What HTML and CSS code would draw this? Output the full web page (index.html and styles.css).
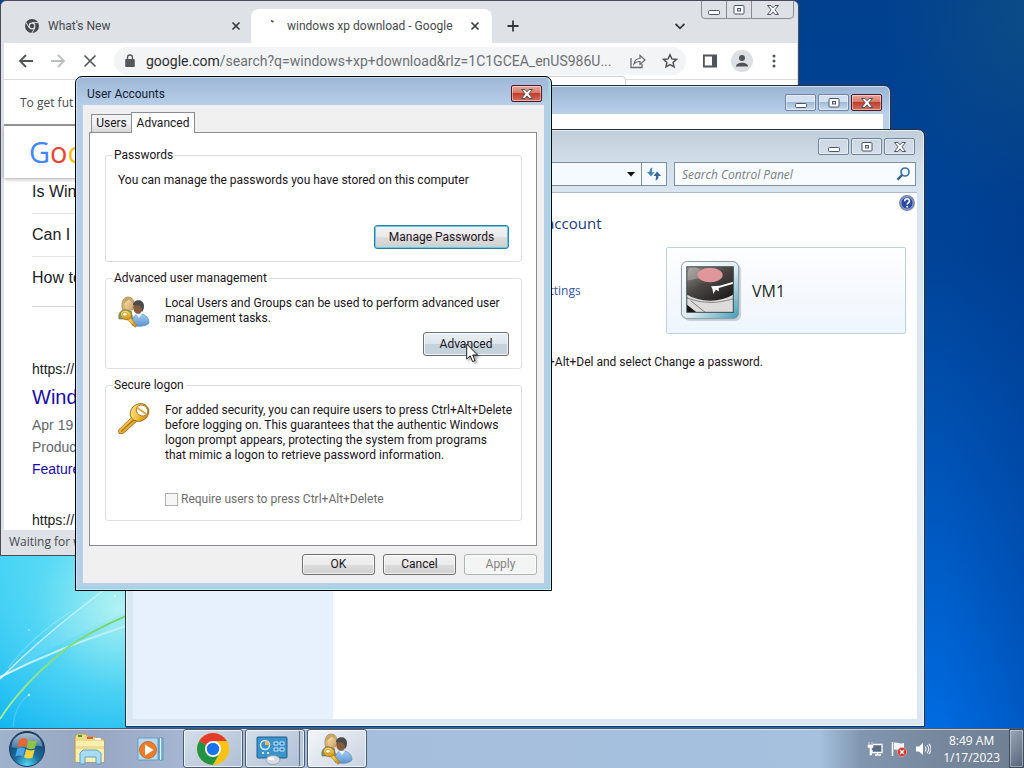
FILE: index.html
```html
<!DOCTYPE html>
<html lang="en">
<head>
<meta charset="utf-8">
<title>Desktop</title>
<link rel="stylesheet" href="styles.css">
</head>
<body>
<svg width="0" height="0" class="defs" aria-hidden="true">
  <defs>
    <linearGradient id="skin" x1="0" y1="0" x2="1" y2="1"><stop offset="0" stop-color="#f7dfb4"/><stop offset="1" stop-color="#cfa263"/></linearGradient>
    <linearGradient id="blueShirt" x1="0" y1="0" x2="0" y2="1"><stop offset="0" stop-color="#a5cdf2"/><stop offset="1" stop-color="#5b93d0"/></linearGradient>
    <linearGradient id="gold" x1="0" y1="0" x2="1" y2="1"><stop offset="0" stop-color="#fff0a0"/><stop offset=".5" stop-color="#f0bb35"/><stop offset="1" stop-color="#b97a12"/></linearGradient>
    <symbol id="i-users" viewBox="0 0 32 32">
      <path d="M4.500 14C3 9 4 1 10 1c5 0 6.500 4 5.500 9l-1 4z" fill="#d2b577" stroke="#94793f" stroke-width=".6"/>
      <ellipse cx="10.500" cy="9" rx="4" ry="5.200" fill="url(#skin)"/>
      <path d="M5.500 8C7 6 9 6 11 3c1 2 3 3 4 4 0-7-10-7-9.500 1z" fill="#c5a660"/>
      <path d="M1 23c-1-6 2-9 6-9l6 1 2 8z" fill="#86956a" stroke="#5d6d48" stroke-width=".6"/>
      <path d="M14 29c0-8 3-11 7-11 6 0 10 3 10 9-3 4-12 4-17 2z" fill="url(#blueShirt)" stroke="#4f80b5" stroke-width=".6"/>
      <ellipse cx="20" cy="11.500" rx="4.800" ry="6.300" fill="#855c3c"/>
      <path d="M15 9c0-6 11-7 11 1 0 3-1 5-2 6 0-4-1-6-3-6.500z" fill="#4b4a4c"/>
      <path d="M18 18l3 4 3-4z" fill="#e8f2fc"/>
      <path d="M11.500 20.500l7.500 9-2 1.800-8.500-8.500z" fill="url(#gold)" stroke="#9b7320" stroke-width=".6"/>
      <ellipse cx="8" cy="19" rx="5.600" ry="4.600" transform="rotate(25 8 19)" fill="url(#gold)" stroke="#9b7320" stroke-width=".6"/>
      <ellipse cx="6.800" cy="18.200" rx="2.400" ry="1.800" fill="#fffbe0" stroke="#9b7320" stroke-width=".5"/>
    </symbol>
    <symbol id="i-caption-min" viewBox="0 0 16 12"><rect x="2.500" y="6.500" width="11" height="4" rx="1" fill="#fff" stroke="#4b5468"/></symbol>
    <symbol id="i-caption-max" viewBox="0 0 16 12"><rect x="3" y="1.500" width="10" height="8.500" rx="1" fill="#fff" stroke="#4b5468"/><rect x="6.500" y="4.500" width="3" height="2.500" fill="#dfe8f2" stroke="#4b5468"/></symbol>
    <symbol id="i-caption-close" viewBox="0 0 16 12"><path d="M2.500 1.500h3.500L8 3.800l2-2.300h3.500L9.900 5.800l3.600 4.700H10L8 7.900l-2 2.600H2.500l3.600-4.700z" fill="#fff" stroke="#4b5468"/></symbol>
  </defs>
</svg>

<main class="desktop">
  <svg class="wallpaper" viewBox="0 0 126 172" preserveAspectRatio="none" aria-hidden="true">
    <defs>
      <linearGradient id="beam" x1="0" y1="1" x2="1" y2="0"><stop offset="0" stop-color="#fff" stop-opacity=".8"/><stop offset="1" stop-color="#fff" stop-opacity=".35"/></linearGradient>
      <linearGradient id="grass" x1="0" y1="1" x2="1" y2="0"><stop offset="0" stop-color="#a4f09a"/><stop offset="1" stop-color="#73cf5c"/></linearGradient>
    </defs>
    <path d="M0 122Q40 83 100 36h26v20Q55 89 0 122z" fill="#fff" opacity=".1"/>
    <path d="M0 123Q40 82 104 34" fill="none" stroke="url(#beam)" stroke-width="1.500"/>
    <path d="M8 112Q30 82 70 56" fill="none" stroke="#fff" stroke-opacity=".35"/>
    <path d="M0 121Q30 106 60 94T126 70" fill="none" stroke="url(#beam)" stroke-width="2"/>
    <path d="M0 163Q20 131 64 94Q90 75 126 60" fill="none" stroke="url(#grass)" stroke-width="1.800"/>
    <path d="M13 171Q14 151 28 139" fill="none" stroke="#fff" stroke-opacity=".25"/>
    <circle cx="29" cy="139" r="1.200" fill="#b8f5e0"/><circle cx="29" cy="74" r="1" fill="#9aeaff"/><circle cx="115" cy="40" r="1.200" fill="#e6ffff"/>
  </svg>

  <section class="window browser" aria-label="Browser">
    <header class="tabstrip">
      <div class="browser-tab">
        <svg class="icon14" viewBox="0 0 14 14"><circle cx="7" cy="7" r="7" fill="#45494d"/><circle cx="7" cy="7" r="3.400" fill="#dee1e6"/><circle cx="7" cy="7" r="2.200" fill="#45494d"/><path d="M7 3.600h6.200M4.100 8.700L1 3.400M9.900 8.700L6.900 14" stroke="#dee1e6" stroke-width="1"/></svg>
        <span class="tab-title">What's New</span>
        <button class="plain" aria-label="Close tab"><svg class="icon10" viewBox="0 0 10 10"><path d="M1.500 1.500l7 7m0-7l-7 7" stroke="#33373b" stroke-width="1.600"/></svg></button>
      </div>
      <div class="browser-tab current">
        <svg class="icon14" viewBox="0 0 14 14"><path d="M7 1.500l2.500 1.500" stroke="#555" stroke-width="1.600"/></svg>
        <span class="tab-title">windows xp download - Google</span>
        <button class="plain" aria-label="Close tab"><svg class="icon10" viewBox="0 0 10 10"><path d="M1.500 1.500l7 7m0-7l-7 7" stroke="#33373b" stroke-width="1.600"/></svg></button>
      </div>
      <button class="plain new-tab" aria-label="New tab"><svg class="icon12" viewBox="0 0 12 12"><path d="M6 .5v11M.5 6h11" stroke="#33373b" stroke-width="1.800"/></svg></button>
      <button class="plain tab-search" aria-label="Search tabs"><svg class="icon12" viewBox="0 0 12 12"><path d="M1.500 3.800L6 8.300l4.500-4.500" fill="none" stroke="#33373b" stroke-width="1.800"/></svg></button>
      <div class="glass-captions">
        <button aria-label="Minimize"><svg class="caption-icon"><use href="#i-caption-min"/></svg></button>
        <button aria-label="Maximize"><svg class="caption-icon"><use href="#i-caption-max"/></svg></button>
        <button class="wide" aria-label="Close"><svg class="caption-icon"><use href="#i-caption-close"/></svg></button>
      </div>
    </header>
    <nav class="toolbar">
      <button class="plain" aria-label="Back"><svg class="icon16" viewBox="0 0 16 16"><path d="M15 8H2M8 2L2 8l6 6" fill="none" stroke="#505357" stroke-width="1.800"/></svg></button>
      <button class="plain" aria-label="Forward"><svg class="icon16" viewBox="0 0 16 16"><path d="M1 8h13M8 2l6 6-6 6" fill="none" stroke="#bcbec1" stroke-width="1.800"/></svg></button>
      <button class="plain" aria-label="Stop"><svg class="icon16" viewBox="0 0 16 16"><path d="M2.500 2.500l11 11m0-11l-11 11" stroke="#505357" stroke-width="1.600"/></svg></button>
      <div class="omnibox">
        <svg class="icon14" viewBox="0 0 14 14"><path d="M3 5h8a.8.8 0 0 1 .8.800v6.400a.8.8 0 0 1-.8.800H3a.8.8 0 0 1-.8-.8V5.800A.8.8 0 0 1 3 5z" fill="#54575b"/><path d="M4.500 6V3.500a2.500 2.500 0 0 1 5 0V6" fill="none" stroke="#54575b" stroke-width="1.300"/></svg>
        <span class="url"><span class="host">google.com</span>/search?q=windows+xp+download&amp;rlz=1C1GCEA_enUS986U...</span>
        <button class="plain" aria-label="Share"><svg class="icon16" viewBox="0 0 16 16"><path d="M1 5v9.500h11V11" fill="none" stroke="#66696d" stroke-width="1.300"/><path d="M4 11c.5-4 3-5.500 6-5.500V2.300l5 4.700-5 4.500V8.500c-3 0-4.500.5-6 2.500z" fill="none" stroke="#66696d" stroke-width="1.200"/></svg></button>
        <button class="plain" aria-label="Bookmark"><svg class="icon16" viewBox="0 0 16 16"><path d="M8 1.800l1.900 4.100 4.500.5-3.300 3 .9 4.500-4-2.300-4 2.300.9-4.500-3.300-3 4.500-.5z" fill="none" stroke="#505357" stroke-width="1.500"/></svg></button>
      </div>
      <button class="plain" aria-label="Side panel"><svg class="icon16" viewBox="0 0 16 16"><path fill="#505357" fill-rule="evenodd" d="M1 1.500h14v13H1zM2.800 3.500v9H10v-9z"/></svg></button>
      <button class="plain avatar" aria-label="Profile"><svg class="icon16" viewBox="0 0 16 16"><circle cx="8" cy="5" r="3" fill="#505357"/><path d="M2 13.500c0-5 12-5 12 0z" fill="#505357"/></svg></button>
      <button class="plain" aria-label="Menu"><svg class="icon16" viewBox="0 0 16 16"><circle cx="8" cy="3" r="1.500" fill="#505357"/><circle cx="8" cy="8" r="1.500" fill="#505357"/><circle cx="8" cy="13" r="1.500" fill="#505357"/></svg></button>
    </nav>
    <div class="bubble"></div>
    <div class="infobar">To get fut</div>
    <div class="google-bar"><span class="g-blue">G</span><span class="g-red">o</span><span class="g-yellow">o</span></div>
    <div class="results">
      <p class="question">Is Win</p>
      <p class="question">Can I</p>
      <p class="question last">How to</p>
      <p class="cite">https://</p>
      <a class="result-title" href="#">Windo</a>
      <p class="snippet">Apr 19</p>
      <p class="snippet">Product</p>
      <a class="result-link" href="#">Feature</a>
      <p class="cite next">https://</p>
    </div>
    <footer class="status">Waiting for w</footer>
  </section>

  <section class="window aero back-window" aria-label="Background window">
    <div class="captions">
      <button class="caption" aria-label="Minimize"><svg class="caption-icon"><use href="#i-caption-min"/></svg></button>
      <button class="caption" aria-label="Maximize"><svg class="caption-icon"><use href="#i-caption-max"/></svg></button>
      <button class="caption close" aria-label="Close"><svg class="caption-icon"><use href="#i-caption-close"/></svg></button>
    </div>
    <div class="client"></div>
  </section>

  <section class="window aero control-panel" aria-label="Control Panel">
    <div class="captions">
      <button class="caption" aria-label="Minimize"><svg class="caption-icon"><use href="#i-caption-min"/></svg></button>
      <button class="caption" aria-label="Maximize"><svg class="caption-icon"><use href="#i-caption-max"/></svg></button>
      <button class="caption" aria-label="Close"><svg class="caption-icon"><use href="#i-caption-close"/></svg></button>
    </div>
    <div class="address-row">
      <div class="address">
        <button class="plain" aria-label="Previous locations"><svg class="icon10" viewBox="0 0 10 10"><path d="M1 3h8L5 7.500z" fill="#111"/></svg></button>
        <button class="plain refresh" aria-label="Refresh"><svg class="icon16" viewBox="0 0 16 16"><path d="M6.500 1.500C4 2 3.500 4 3.500 6H1l4 4.500L8.500 6H6c0-2 .2-3 .5-4.500z" fill="#3f86bb"/><path d="M9.500 14.500c2.500-.5 3-2.500 3-4.500H15l-4-4.500L7.500 10H10c0 2-.2 3-.5 4.500z" fill="#35689d"/></svg></button>
      </div>
      <label class="search"><input type="text" placeholder="Search Control Panel" aria-label="Search Control Panel"><svg class="icon16" viewBox="0 0 16 16"><circle cx="10" cy="6" r="4" fill="#eef8ff" stroke="#3c76a4" stroke-width="1.700"/><path d="M7 9l-4.500 4.800" stroke="#2f5f96" stroke-width="2.400"/></svg></label>
    </div>
    <div class="client cp-client">
      <aside class="cp-side"></aside>
      <div class="cp-main">
        <button class="plain help" aria-label="Help"><svg class="icon16" viewBox="0 0 16 16"><circle cx="8" cy="8" r="7.300" fill="#2c4aa2" stroke="#7b8299" stroke-width="1.200"/><circle cx="8" cy="8" r="6.200" fill="none" stroke="#c4cfee" stroke-width=".8"/><path d="M5.700 6.300c0-3.300 4.800-3.200 4.800-.3 0 1.800-2.300 1.700-2.300 3.500" fill="none" stroke="#fff" stroke-width="1.600"/><circle cx="8.200" cy="11.800" r="1" fill="#fff"/></svg></button>
        <h1 class="cp-heading">account</h1>
        <div class="cp-row">
          <a class="cp-link" href="#">settings</a>
          <div class="account-card">
            <svg class="account-picture" viewBox="0 0 64 64" role="img" aria-label="Account picture">
              <defs>
                <linearGradient id="frame" x1="0" y1="0" x2="1" y2="1"><stop offset="0" stop-color="#fff"/><stop offset=".55" stop-color="#dcebf0"/><stop offset="1" stop-color="#3f9bb5"/></linearGradient>
                <linearGradient id="vinyl" x1="0" y1="0" x2="1" y2="1"><stop offset="0" stop-color="#c9c4c0"/><stop offset=".5" stop-color="#4c4846"/><stop offset="1" stop-color="#0c0b0b"/></linearGradient>
                <clipPath id="photo"><rect x="7" y="7" width="48" height="47"/></clipPath>
              </defs>
              <rect x="4" y="4" width="59" height="59" rx="6" fill="#8b969c" opacity=".4"/>
              <rect x="1.500" y="1.500" width="59" height="59" rx="6" fill="url(#frame)" stroke="#85979f"/>
              <g clip-path="url(#photo)">
                <rect x="7" y="7" width="48" height="47" fill="#dedcda"/>
                <ellipse cx="31" cy="20" rx="34" ry="22" fill="url(#vinyl)"/>
                <path d="M3 22L30 17 12 4z" fill="#d6d2cd" opacity=".35"/>
                <path d="M7 39q22 9 48 1" fill="none" stroke="#8e8d8c" stroke-width="1.200"/>
                <ellipse cx="31" cy="15.500" rx="13" ry="7.500" fill="#e0979c"/>
                <path d="M55 22.500l-14 4-9 .5 1.500 3 1 5 2.500-4.500 3 2v-3.500l15-4.500z" fill="#fff"/>
                <path d="M7 46l10 8H7z" fill="#161616"/><path d="M11 42l15 12" stroke="#777"/>
              </g>
              <rect x="7" y="7" width="48" height="47" fill="none" stroke="#39464a"/>
            </svg>
            <span class="account-name">VM1</span>
          </div>
        </div>
        <p class="cp-note">+Alt+Del and select Change a password.</p>
      </div>
    </div>
  </section>

  <section class="window aero dialog" role="dialog" aria-labelledby="dialog-title">
    <header class="dialog-title">
      <h2 id="dialog-title">User Accounts</h2>
      <button class="caption close" aria-label="Close"><svg class="caption-icon"><use href="#i-caption-close"/></svg></button>
    </header>
    <div class="client dialog-client">
      <div class="tabs" role="tablist">
        <button class="tab" role="tab" aria-selected="false">Users</button>
        <button class="tab selected" role="tab" aria-selected="true">Advanced</button>
      </div>
      <div class="panel" role="tabpanel">
        <fieldset>
          <legend>Passwords</legend>
          <p>You can manage the passwords you have stored on this computer</p>
          <div class="actions far"><button class="btn focused manage">Manage Passwords</button></div>
        </fieldset>
        <fieldset>
          <legend>Advanced user management</legend>
          <div class="with-icon">
            <svg class="icon32"><use href="#i-users"/></svg>
            <p>Local Users and Groups can be used to perform advanced user<br>management tasks.</p>
          </div>
          <div class="actions"><button class="btn hot">Advanced</button></div>
        </fieldset>
        <fieldset>
          <legend>Secure logon</legend>
          <div class="with-icon">
            <svg class="icon32" viewBox="0 0 32 32"><path d="M14 14l4.500 4.500L5 30.500 1 30.500 .5 27z" fill="url(#gold)" stroke="#94601a" stroke-width=".8"/><path d="M3 28.500L16 16.500" stroke="#a8701c" stroke-width="1.200"/><ellipse cx="21.500" cy="9.500" rx="9.800" ry="8.500" transform="rotate(-35 21.500 9.500)" fill="url(#gold)" stroke="#94601a" stroke-width=".8"/><ellipse cx="24" cy="7.500" rx="6" ry="5.200" transform="rotate(35 24 7.500)" fill="#fff" stroke="#a8701c" stroke-width=".8"/><path d="M19 4.500l9 6.500" stroke="#dca63b" stroke-width="1.600"/></svg>
            <div>
              <p>For added security, you can require users to press Ctrl+Alt+Delete<br>before logging on. This guarantees that the authentic Windows<br>logon prompt appears, protecting the system from programs<br>that mimic a logon to retrieve password information.</p>
              <label class="check"><input type="checkbox" disabled>Require users to press Ctrl+Alt+Delete</label>
            </div>
          </div>
        </fieldset>
      </div>
      <div class="dialog-buttons">
        <button class="btn">OK</button>
        <button class="btn">Cancel</button>
        <button class="btn" disabled>Apply</button>
      </div>
    </div>
  </section>

  <svg class="cursor" viewBox="0 0 13 20" aria-hidden="true"><path d="M.7 1v15l3.500-3.200 2.400 5.700 2.500-1-2.400-5.500h4.800z" fill="#fff" stroke="#222"/></svg>
</main>

<footer class="taskbar">
  <button class="start" aria-label="Start">
    <svg class="orb" viewBox="0 0 38 38">
      <defs>
        <radialGradient id="orb" cx=".5" cy=".95" r=".9"><stop offset="0" stop-color="#53d9f5"/><stop offset=".4" stop-color="#1a6d9f"/><stop offset="1" stop-color="#143a62"/></radialGradient>
        <linearGradient id="gloss" x1="0" y1="0" x2="0" y2="1"><stop offset="0" stop-color="#dfeaf3"/><stop offset="1" stop-color="#5586ae"/></linearGradient>
      </defs>
      <circle cx="19" cy="19" r="17.500" fill="url(#orb)" stroke="#243c5b"/>
      <path d="M3.500 17C4 8 11 3 19 3s15 5 15.500 14c-9-4-22 4-31 0z" fill="url(#gloss)" opacity=".75"/>
      <path d="M11.500 9.500c3-2 6-1.500 8 0l-2 8c-2-1.500-5-1.700-8 0z" fill="#f0652b"/>
      <path d="M20.500 10c2.500 1.500 6 1.500 8.500 0l-2.200 8.300c-2.500 1.300-6 1-8.300-.3z" fill="#8fc540"/>
      <path d="M9.200 18.700c2.800-1.500 6-1.300 8 0l-2.200 8c-2-1.500-5.200-1.500-7.800 0z" fill="#4aa6e4"/>
      <path d="M18.200 19.300c2.500 1.500 5.800 1.500 8.500.2l-2.200 8.200c-2.800 1.200-6 1-8.500-.5z" fill="#ffd23c"/>
    </svg>
  </button>
  <button class="pinned" aria-label="File Explorer">
    <svg class="icon32" viewBox="0 0 32 32"><path d="M1 4l2-3h9l2 3h8l1 2h7v23H1z" fill="#f0d981" stroke="#b59b46" stroke-width=".8"/><path d="M4 2h4v2H4z" fill="#36a445"/><path d="M13 4h6v2h-6z" fill="#e8563c"/><path d="M21 5h6v2h-6z" fill="#fff"/><path d="M2 8h28v21H2z" fill="#faeeb0"/><path d="M2 13h28v3H2z" fill="#f1db8c"/><path d="M6 31V20l3-3h14l4 3v11h-5v-7H11v7z" fill="#a9dbf3" stroke="#4f9cc8" stroke-width=".9"/></svg>
  </button>
  <button class="pinned" aria-label="Media Player">
    <svg class="icon32" viewBox="0 0 32 32"><path d="M25 5h4v22h-4z" fill="#7bb8dc" stroke="#4a86ae" stroke-width=".7"/><path d="M4 5h20v22H4z" fill="#b4dbf0" stroke="#5894bb" stroke-width=".8"/><path d="M26.500 5v22" stroke="#e3f4fc"/><circle cx="14" cy="17" r="8.500" fill="#ee7b25" stroke="#bf5710" stroke-width=".7"/><path d="M11 11.500l8.500 5.500-8.500 5.500z" fill="#fff"/></svg>
  </button>
  <button class="task" aria-label="Google Chrome">
    <svg class="icon32" viewBox="0 0 32 32"><circle cx="16" cy="16" r="16" fill="#fbc116"/><path d="M16 16L2.150 8A16 16 0 0 1 29.850 8z" fill="#e33b2e"/><path d="M2.150 8A16 16 0 0 0 16 32l6.900-12-6.900-4z" fill="#229342"/><path d="M16 8h13.850a16 16 0 0 1-13.850 24l7-12z" fill="#fbc116"/><circle cx="16" cy="16" r="8" fill="#fff"/><circle cx="16" cy="16" r="6.200" fill="#1a73e8"/></svg>
  </button>
  <button class="task stacked" aria-label="Control Panel">
    <svg class="icon32" viewBox="0 0 32 32"><rect x="1" y="4" width="30" height="21" rx="1" fill="#3c93ca" stroke="#215f90"/><circle cx="9" cy="12" r="4.500" fill="none" stroke="#c9ebff" stroke-width="1.500"/><path d="M9 12V7.500a4.500 4.500 0 0 1 4.500 4.500z" fill="#f8b355"/><path d="M18 9h4v3h-4zm6 0h4v3h-4zm-6 6h4v3h-4zm6 0h4v3h-4z" fill="#2775ad" stroke="#c9ebff"/><path d="M6 20h2m3 0h2" stroke="#fff" stroke-width="1.500"/><ellipse cx="17" cy="27" rx="7" ry="4.500" fill="#d9dde3" stroke="#8b939d" stroke-width=".7"/><ellipse cx="15" cy="25.500" rx="3" ry="1.500" fill="#fff"/></svg>
  </button>
  <button class="task active" aria-label="User Accounts"><svg class="icon32"><use href="#i-users"/></svg></button>
  <div class="tray">
    <svg class="icon16" viewBox="0 0 16 16"><path d="M6 3.500h9v8H5V9" fill="#596b82" stroke="#fff" stroke-width="1.300"/><path d="M8 14h6M10.500 12v2" stroke="#fff" stroke-width="1.300"/><path d="M2 1v3m3-3v3M1 4h5v2.500H4.500V14h-1.500V6.500H1z" fill="#fff" stroke="#fff" stroke-width=".6"/></svg>
    <svg class="icon16" viewBox="0 0 16 16"><path d="M1.500 1v14" stroke="#fff" stroke-width="1.500"/><path d="M3 2c3-1.500 5 1.500 10 0v7c-5 1.500-7-1.500-10 0z" fill="#f2f4f7"/><circle cx="11" cy="11" r="4.600" fill="#d33327" stroke="#f5c9c5" stroke-width=".6"/><path d="M9 9l4 4m0-4l-4 4" stroke="#fff" stroke-width="1.500"/></svg>
    <svg class="icon16" viewBox="0 0 16 16"><path d="M1 5.500h3L8 2v12l-4-3.500H1z" fill="#fff"/><path d="M10 5.500q2 2.500 0 5M12 4q3.500 4 0 8M14 2.800q4 5.200 0 10.400" fill="none" stroke="#eef2f7" stroke-width="1.100"/></svg>
    <time class="clock"><span>8:49 AM</span><span>1/17/2023</span></time>
  </div>
  <button class="show-desktop" aria-label="Show desktop"></button>
</footer>
</body>
</html>
```
FILE: styles.css
```css
* { box-sizing: border-box; }
body {
  margin: 0;
  height: 100vh;
  display: flex;
  flex-direction: column;
  overflow: hidden;
  font: 12px/15px "Open Sans", "Noto Sans", sans-serif;
  color: #1b1420;
}
p, h1, h2 { margin: 0; font-weight: normal; }
button, input { font: inherit; color: inherit; }
button { display: flex; flex: none; align-items: center; justify-content: center; padding: 0; }
svg { display: block; flex: none; }
.defs { position: absolute; }
.plain { border: 0; background: none; }
.icon10 { width: 10px; height: 10px; }
.icon12 { width: 12px; height: 12px; }
.icon14 { width: 14px; height: 14px; }
.icon16 { width: 16px; height: 16px; }
.icon32 { width: 32px; height: 32px; }

.desktop {
  position: relative;
  flex: 1;
  overflow: hidden;
  background:
    radial-gradient(ellipse 200px 280px at 100% 2%, #0c4c86 0, rgba(12, 76, 134, 0) 70%),
    linear-gradient(90deg, rgba(0, 50, 130, 0) 92%, rgba(0, 50, 130, .3) 100%),
    linear-gradient(180deg, #00408f 0, #004397 35%, #0056bb 68%, #006be0 100%);
}
.wallpaper {
  position: absolute;
  left: 0;
  bottom: 0;
  width: 126px;
  height: 172px;
  background:
    radial-gradient(circle at 95% 30%, rgba(181, 245, 240, .9) 0, rgba(120, 230, 245, .5) 50%, rgba(30, 190, 245, 0) 100%),
    linear-gradient(180deg, #38cef5, #12b5f2);
}

/* Windows */
.window { position: absolute; display: flex; flex-direction: column; }
.aero {
  padding: 0 7px 7px;
  border: 1px solid #26313d;
  border-radius: 7px 7px 0 0;
  background: linear-gradient(180deg, #99b4d2 0, #b9d0ea 28px, #b9d0ea 100%);
  box-shadow: inset 0 0 0 1px rgba(255, 255, 255, .6);
}
.client { flex: 1; background: #fff; }
.captions { display: flex; justify-content: flex-end; gap: 2px; }
.caption {
  width: 31px;
  height: 17px;
  border: 1px solid #71839c;
  border-radius: 2px;
  background: linear-gradient(180deg, rgba(255, 255, 255, .5) 45%, rgba(120, 155, 190, .25) 50%, rgba(255, 255, 255, .3));
  box-shadow: inset 0 0 0 1px rgba(255, 255, 255, .45);
}
.control-panel .caption { background: rgba(255, 255, 255, .12); }
.caption.close {
  border-color: #4f1a22;
  background: linear-gradient(180deg, #e8a79c 0, #d97a69 45%, #c03d2c 50%, #d3705a 100%);
}
.caption-icon { width: 16px; height: 12px; }

/* Browser */
.browser {
  left: 0;
  top: 0;
  width: 799px;
  height: 556px;
  border: 1px solid #4b4b58;
  border-radius: 6px 6px 0 0;
  padding: 0 1px 2px 3px;
  background: #dee1e6;
  color: #46494d;
  overflow: hidden;
}
.tabstrip { display: flex; height: 42px; padding: 8px 3px 0 8px; align-items: stretch; }
.browser-tab {
  display: flex;
  align-items: center;
  gap: 9px;
  width: 239px;
  padding: 0 10px 0 13px;
}
.browser-tab.current { background: #fff; border-radius: 8px 8px 0 0; width: 241px; padding: 0 12px 0 13px; }
.tab-title { flex: 1; min-width: 0; overflow: hidden; white-space: nowrap; font-family: Roboto, sans-serif; }
.new-tab { width: 42px; }
.tab-search { margin-left: auto; width: 28px; }
.glass-captions {
  display: flex;
  align-self: flex-start;
  margin: -9px 0 0 7px;
  border: 1px solid #8a8c92;
  border-radius: 0 0 4px 4px;
}
.glass-captions button { width: 25px; height: 17px; border: 0; border-right: 1px solid #8a8c92; background: none; }
.glass-captions .wide { width: 41px; border-right: 0; }
.toolbar {
  display: flex;
  align-items: center;
  gap: 16px;
  height: 37px;
  padding: 0 15px 0 14px;
  background: #fff;
  border-bottom: 1px solid #dcdcdd;
}
.omnibox {
  flex: 1;
  min-width: 0;
  display: flex;
  align-items: center;
  gap: 16px;
  height: 28px;
  padding: 0 8px 0 9px;
  border-radius: 14px;
  background: #f3f4f6;
}
.omnibox .icon14 { margin-right: -7px; }
.url { flex: 1; min-width: 0; white-space: nowrap; font: 14px/20px Roboto, sans-serif; color: #6d7074; }
.host { color: #2b2d30; }
.toolbar .avatar { width: 22px; height: 22px; margin: 0 -3px; border-radius: 11px; background: #dcdfe4; }
.bubble {
  position: absolute;
  left: 500px;
  top: 75px;
  width: 125px;
  height: 20px;
  background: #fff;
  border: 1px solid #cfcfd2;
  border-radius: 4px;
}
.infobar { height: 46px; padding: 15px 16px; background: #fff; border-bottom: 2px solid #9b9b9d; }
.google-bar {
  height: 52px;
  padding: 9px 25px;
  background: #fff;
  box-shadow: 0 1px 4px rgba(0, 0, 0, .35);
  font: 500 29px/34px "Open Sans", sans-serif;
  position: relative;
}
.g-blue { color: #4285f4; }
.g-red { color: #ea4335; }
.g-yellow { color: #fbbc05; }
.results {
  flex: 1;
  padding: 0 28px;
  background: #fff;
  font: 14px/22px "Liberation Sans", Arial, sans-serif;
  color: #202124;
  overflow: hidden;
}
.question { height: 43px; padding-top: 10px; font-size: 16px; line-height: 22px; border-bottom: 1px solid #e3e4e6; }
.question:first-child { height: 36px; padding-top: 3px; }
.question.last { height: 50px; margin-bottom: 51px; border-bottom-color: #d3d5d8; }
.result-title { display: block; font-size: 20px; line-height: 34px; color: #1a0dab; text-decoration: none; }
.result-link { display: block; color: #1a0dab; text-decoration: none; }
.snippet { color: #64676b; }
.cite.next { margin-top: 29px; }
.status { height: 23px; padding: 4px 5px; background: #dee1e6; }

/* Window behind the control panel */
.back-window { left: 300px; top: 85px; width: 591px; height: 300px; }
.back-window .captions { padding: 8px 1px 3px 0; }

/* Control panel */
.control-panel {
  left: 125px;
  top: 129px;
  width: 800px;
  height: 598px;
  background: linear-gradient(180deg, #c0ced9 0, #d3dfea 34px, #d9e5f0 64px, #dbe7f2 100%);
}
.control-panel .captions { padding: 8px 2px 7px; }
.address-row { display: flex; gap: 7px; height: 24px; margin: 0 1px 6px 0; }
.address {
  flex: 1;
  display: flex;
  justify-content: flex-end;
  border: 1px solid #808f9c;
  background: #f5faff;
}
.address button { width: 20px; }
.address .refresh { width: 25px; border-left: 1px solid #808f9c; }
.search {
  display: flex;
  align-items: center;
  width: 242px;
  padding: 0 4px 0 7px;
  border: 1px solid #808f9c;
  background: #f9fcff;
}
.search input { flex: 1; min-width: 0; padding: 0; border: 0; background: none; outline: 0; }
.search input::placeholder { color: #777c82; font-style: italic; opacity: 1; }
.cp-client { display: flex; border-top: 1px solid #aebccb; }
.cp-side { width: 200px; background: #e6f1fd; }
.cp-main { flex: 1; padding: 2px 11px 0 0; }
.help.plain { margin: 0 -9px 0 auto; }
.cp-heading { padding: 1px 0 0 213px; font-size: 15px; line-height: 22px; color: #1c3a7c; }
.cp-row { display: flex; align-items: center; justify-content: space-between; margin-top: 13px; }
.cp-link { padding-left: 204px; color: #3653ae; text-decoration: none; }
.account-card {
  display: flex;
  align-items: center;
  gap: 10px;
  width: 240px;
  height: 87px;
  padding-left: 13px;
  border: 1px solid #bdd2e5;
  border-radius: 2px;
  background: linear-gradient(180deg, #fdfeff, #eff5fd);
}
.account-picture { width: 62px; height: 62px; }
.account-name { font-size: 16px; line-height: 22px; color: #1e2b1e; }
.cp-note { margin-top: 21px; padding-left: 215px; font-family: Roboto, sans-serif; }

/* User accounts dialog */
.dialog {
  left: 75px;
  top: 76px;
  width: 477px;
  height: 515px;
  font-family: Roboto, "Open Sans", sans-serif;
  border-color: #000;
  background: linear-gradient(180deg, #9db7d5 0, #b7cee8 28px, #b7cee8 100%);
  box-shadow: inset 0 0 0 1px rgba(215, 238, 250, .7), inset -3px -3px 0 #9bd6e2;
}
.dialog-title { display: flex; align-items: center; justify-content: space-between; height: 28px; padding: 5px 2px 0 4px; }
.dialog-title h2 { font-size: 12px; line-height: 16px; color: #111c33; }
.dialog-client { padding: 7px 7px 8px 6px; background: #f0f0f0; }
.tabs { display: flex; align-items: flex-end; padding-left: 2px; height: 21px; margin-bottom: -1px; position: relative; }
.tab {
  height: 19px;
  width: 40px;
  border: 1px solid #898c95;
  border-right: 0;
  background: linear-gradient(180deg, #f2f2f2 50%, #d6d6d6);
}
.tab.selected { height: 21px; width: 64px; border-right: 1px solid #898c95; border-bottom: 0; background: #fff; }
.panel {
  display: flex;
  flex-direction: column;
  gap: 8px;
  padding: 14px 14px 24px 15px;
  border: 1px solid #898c95;
  background: #fff;
}
fieldset { margin: 0; padding: 10px 12px 12px; border: 1px solid #dcdfe2; border-radius: 3px; min-width: 0; }
legend { margin-left: -6px; padding: 0 2px; line-height: 16px; }
.actions { display: flex; justify-content: flex-end; margin-top: 4px; }
.actions.far { margin-top: 37px; }
.with-icon { display: flex; gap: 15px; }
.with-icon p { white-space: nowrap; }
.btn {
  width: 73px;
  height: 21px;
  border: 1px solid #707070;
  border-radius: 3px;
  background: linear-gradient(180deg, #f2f2f2 0, #ebebeb 50%, #dddddd 51%, #cfcfcf 100%);
  box-shadow: inset 0 0 0 1px rgba(255, 255, 255, .7);
}
.actions .btn { height: 24px; width: 86px; }
.actions .manage { width: 135px; }
.btn.focused { border-color: #2f7f9f; box-shadow: inset 0 0 0 1px #61cbe8; }
.btn.hot { background: linear-gradient(180deg, #e9f0f5 0, #dce5eb 50%, #c4d2db 51%, #c6d3dc 100%); }
.btn:disabled { color: #838383; border-color: #adb2b5; background: #f4f4f4; }
.check { display: flex; align-items: center; gap: 3px; margin-top: 28px; height: 17px; color: #6d6d6d; }
.check input {
  appearance: none;
  width: 13px;
  height: 13px;
  margin: 0;
  border: 1px solid #b1b1b1;
  background: #f6f6f6;
}
.dialog-buttons { display: flex; justify-content: flex-end; gap: 8px; margin-top: 8px; }

.cursor { position: absolute; left: 466px; top: 343px; width: 13px; height: 20px; filter: drop-shadow(2px 2px 1px rgba(0, 0, 0, .35)); }

/* Taskbar */
.taskbar {
  display: flex;
  height: 40px;
  border-top: 1px solid #47596b;
  box-shadow: inset 0 1px 0 rgba(255, 255, 255, .55);
  background: linear-gradient(90deg, #9fb3cc 0, #97a6c2 9%, #a6b7d3 18%, #a5bedc 36%, #a5c1de 80%, #8296b0 84%, #76879c 92%, #6e7e93 100%);
}
.taskbar button { border: 0; background: none; }
.taskbar .start { width: 54px; }
.orb { width: 38px; height: 38px; }
.taskbar .pinned { width: 60px; padding-left: 12px; }
.taskbar .task {
  width: 60px;
  margin-right: 2px;
  border: 1px solid #4b5b70;
  border-radius: 3px;
  background: linear-gradient(135deg, #d4deea, #b0bfd5);
  box-shadow: inset 0 0 0 1px rgba(255, 255, 255, .7);
}
.taskbar .pinned + .task { margin-left: 9px; }
.taskbar .stacked { padding-right: 6px; box-shadow: inset 0 0 0 1px rgba(255, 255, 255, .7), inset -4px 0 0 #b9c9dd, inset -5px 0 0 #5e6f85; }
.taskbar .active { background: linear-gradient(135deg, #f3f6f9, #c9d3e2); }
.tray { display: flex; align-items: center; gap: 8px; margin-left: auto; padding-right: 9px; color: #fff; }
.clock { display: flex; flex-direction: column; align-items: center; margin-left: 4px; line-height: 17px; }
.taskbar .show-desktop {
  width: 15px;
  border: 1px solid #3f4c5d;
  background: linear-gradient(135deg, #9aa6b6, #55647a);
  box-shadow: inset 0 0 0 1px rgba(255, 255, 255, .35);
}
```
